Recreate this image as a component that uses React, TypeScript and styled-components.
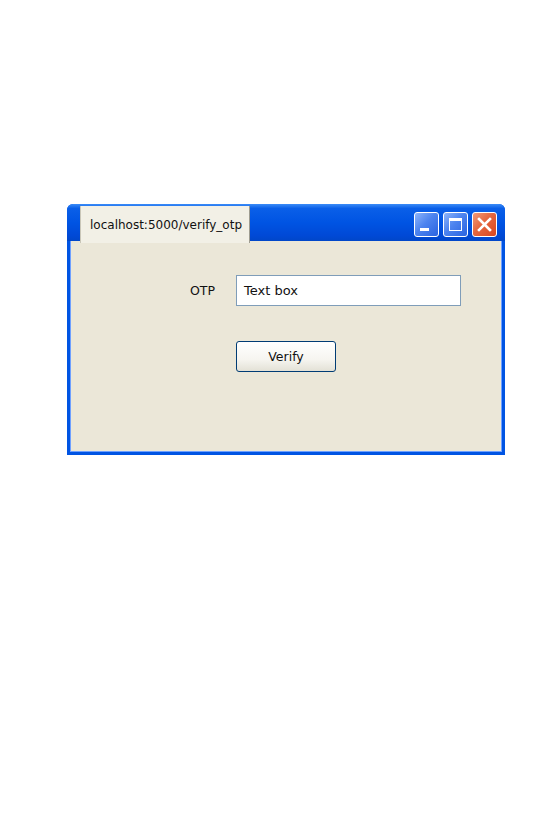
import React from "react";
import styled, { createGlobalStyle } from "styled-components";

const Global = createGlobalStyle`
  html, body { margin: 0; padding: 0; background: #ffffff; }
  body { font-family: "DejaVu Sans", Verdana, sans-serif; }
`;

const Page = styled.div`
  width: 540px;
  height: 833px;
  padding: 204px 0 0 67px;
  box-sizing: border-box;
`;

const Window = styled.div`
  width: 438px;
  height: 251px;
  display: flex;
  flex-direction: column;
  background: #0054e3;
  border-radius: 6px 6px 0 0;
  overflow: hidden;
`;

const TitleBar = styled.div`
  height: 37px;
  display: flex;
  align-items: flex-start;
  padding: 2px 8px 0 13px;
  background: linear-gradient(180deg, #3b8cf7 0%, #0a5fe8 12%, #0054e3 50%, #0049d6 85%, #0046c8 100%);
  box-sizing: border-box;
  position: relative;
  z-index: 1;
`;

const Tab = styled.div`
  height: 37px;
  width: 170px;
  padding: 0 0 0 9px;
  display: flex;
  align-items: center;
  background: #f2f0e6;
  border-left: 1px solid #c9c6b8;
  border-right: 1px solid #9e9c90;
  font-size: 12px;
  color: #111;
  box-sizing: border-box;
  white-space: nowrap;
`;

const Spacer = styled.div`
  flex: 1;
`;

const Buttons = styled.div`
  display: flex;
  gap: 4px;
  margin-top: 6px;
`;

const CtrlButton = styled.div<{ $close?: boolean }>`
  width: 25px;
  height: 25px;
  box-sizing: border-box;
  border: 1px solid #ffffff;
  border-radius: 3px;
  display: flex;
  align-items: center;
  justify-content: center;
  background: ${(p) =>
    p.$close
      ? "linear-gradient(135deg, #f29a7a 0%, #e5673f 45%, #d8461f 100%)"
      : "linear-gradient(135deg, #8cb4fb 0%, #4d84ef 45%, #2a63e0 100%)"};
`;

const Body = styled.div`
  flex: 1;
  margin: 0 3px 3px 3px;
  background: #ebe7d8;
  box-shadow: inset 1px 0 0 #6ea0ff, inset -1px 0 0 #6ea0ff, inset 0 -1px 0 #6ea0ff;
  display: flex;
  flex-direction: column;
  padding: 34px 0 0 0;
  box-sizing: border-box;
`;

const Row = styled.div`
  display: grid;
  grid-template-columns: 145px 225px;
  column-gap: 21px;
  align-items: center;
`;

const Label = styled.div`
  text-align: right;
  font-size: 12.5px;
  color: #111;
`;

const Input = styled.div`
  height: 31px;
  box-sizing: border-box;
  border: 1px solid #7f9db9;
  background: #ffffff;
  display: flex;
  align-items: center;
  padding-left: 7px;
  font-size: 13px;
  color: #111;
`;

const ButtonRow = styled.div`
  margin: 35px 0 0 166px;
`;

const Button = styled.div`
  width: 100px;
  height: 31px;
  box-sizing: border-box;
  border: 1px solid #003c74;
  border-radius: 3px;
  background: linear-gradient(180deg, #ffffff 0%, #f6f5f0 60%, #e3e1d6 100%);
  display: flex;
  align-items: center;
  justify-content: center;
  font-size: 12.5px;
  color: #111;
`;

export default function App() {
  return (
    <>
      <Global />
      <Page>
        <Window>
          <TitleBar>
            <Tab>localhost:5000/verify_otp</Tab>
            <Spacer />
            <Buttons>
              <CtrlButton>
                <svg width="23" height="23" viewBox="0 0 23 23">
                  <rect x="5" y="15" width="9" height="3" fill="#fff" />
                </svg>
              </CtrlButton>
              <CtrlButton>
                <svg width="23" height="23" viewBox="0 0 23 23">
                  <rect x="5.5" y="5.5" width="12" height="12" fill="none" stroke="#fff" strokeWidth="1" />
                  <rect x="5" y="5" width="13" height="3" fill="#fff" />
                </svg>
              </CtrlButton>
              <CtrlButton $close>
                <svg width="23" height="23" viewBox="0 0 23 23">
                  <path d="M6 6 L17 17 M17 6 L6 17" stroke="#fff" strokeWidth="2.6" strokeLinecap="square" />
                </svg>
              </CtrlButton>
            </Buttons>
          </TitleBar>
          <Body>
            <Row>
              <Label>OTP</Label>
              <Input>Text box</Input>
            </Row>
            <ButtonRow>
              <Button>Verify</Button>
            </ButtonRow>
          </Body>
        </Window>
      </Page>
    </>
  );
}
